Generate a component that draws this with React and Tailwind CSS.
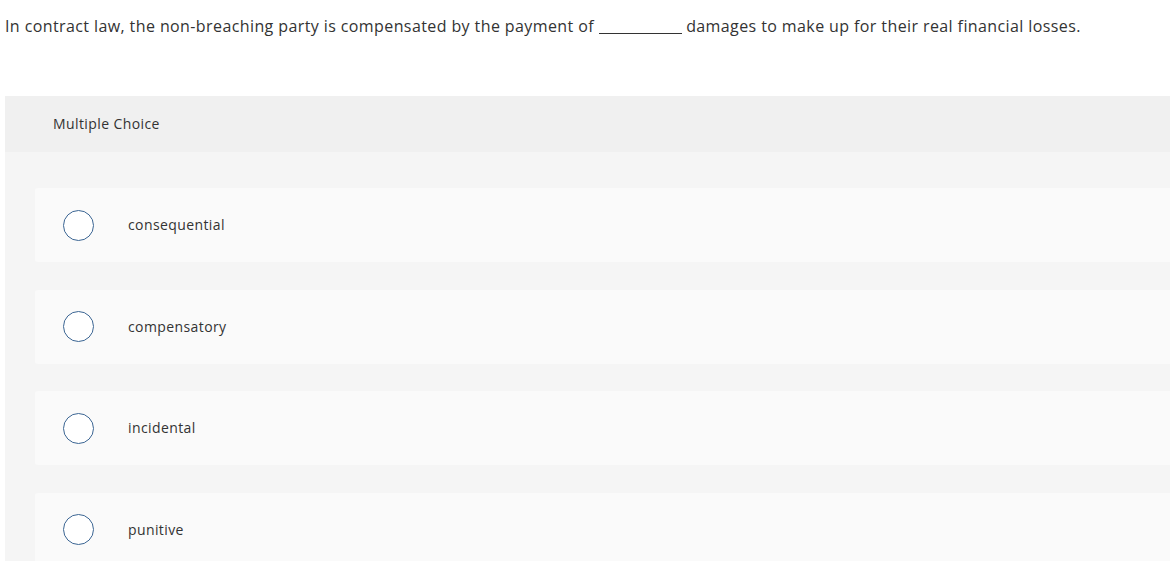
import React from "react";

const options = ["consequential", "compensatory", "incidental", "punitive"];

export default function App() {
  return (
    <div className="w-[1170px] h-[561px] overflow-hidden bg-white text-[#333333] tracking-[0.4px]" style={{ fontFamily: "'Open Sans', Lato, sans-serif" }}>
      <div className="pl-[5px] pt-[15px] text-[16px] leading-[22px]">
        In contract law, the non-breaching party is compensated by the payment of{" "}
        <span className="inline-block w-[83px] border-b border-[#333333] align-baseline translate-y-[2px]"></span>{" "}
        damages to make up for their real financial losses.
      </div>
      <div className="ml-[5px] mt-[59px] bg-[#f5f5f5]">
        <div className="h-[56px] bg-[#f0f0f0] flex items-center pl-[48px] text-[14px] pb-[1px]">Multiple Choice</div>
        <div className="pl-[30px] pt-[36px] flex flex-col gap-[27.5px]">
          {options.map((o) => (
            <div key={o} className="h-[74px] bg-[#fafafa] rounded-l-[3px] flex items-center">
              <div className="ml-[28px] w-[31px] h-[31px] rounded-full border-[1.5px] border-[#3b6593] bg-white"></div>
              <div className="ml-[34px] text-[14px] pb-[1px]">{o}</div>
            </div>
          ))}
        </div>
      </div>
    </div>
  );
}
